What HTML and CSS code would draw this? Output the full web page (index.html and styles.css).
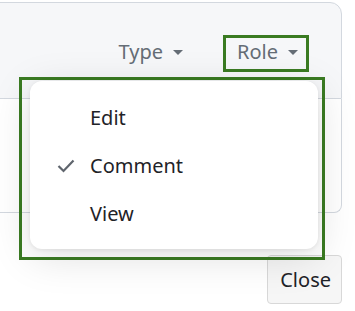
FILE: index.html
```html
<!DOCTYPE html>
<html lang="en">
<head>
<meta charset="UTF-8">
<meta name="viewport" content="width=device-width, initial-scale=1.0">
<title>Share settings</title>
<link rel="stylesheet" href="styles.css">
</head>
<body>
<div class="page">
  <div class="card">
    <div class="card-header">
      <div class="filters">
        <button class="filter">Type <svg class="caret" width="10" height="5" viewBox="0 0 10 5"><polygon points="0,0 10,0 5,5"/></svg></button>
        <button class="filter active">Role <svg class="caret" width="10" height="5" viewBox="0 0 10 5"><polygon points="0,0 10,0 5,5"/></svg></button>
      </div>
    </div>
    <div class="card-body"></div>
  </div>

  <div class="footer">
    <button class="btn">Close</button>
  </div>

  <!-- role dropdown, open -->
  <div class="menu-frame">
    <ul class="menu">
      <li class="menu-item">Edit</li>
      <li class="menu-item checked">
        <svg class="check" width="18" height="14" viewBox="0 0 18 14"><polyline points="1.5,7 6.5,12 16.5,1.5"/></svg>
        Comment
      </li>
      <li class="menu-item">View</li>
    </ul>
  </div>
</div>
</body>
</html>
```

FILE: styles.css
```css
body {
  font-family: "Noto Sans", "Open Sans", sans-serif;
  background-color: #fff;
  margin: 0;
  padding: 0;
}

.page {
  position: relative;
  width: 355px;
  height: 311px;
  overflow: hidden;
}

.card {
  margin: 2px 0 0 -20px;
  width: 362px;
}

.card-header {
  height: 95px;
  background-color: #f6f7f9;
  border: 1px solid #d3d8df;
  border-radius: 0 12px 0 0;
  box-sizing: border-box;
  height: 97px;
  padding: 32px 32px 0 0;
}

.filters {
  display: flex;
  justify-content: flex-end;
  gap: 29px;
}

.filter {
  display: flex;
  align-items: center;
  gap: 10px;
  font-family: inherit;
  font-size: 20px;
  line-height: 28px;
  color: #656d76;
  background: none;
  border: 3px solid transparent;
  padding: 0 8px 3px 11px;
  margin: 0;
}

.filter.active {
  border-color: #3a7b22;
}

.caret {
  fill: #656d76;
  margin-top: 1px;
}

.card-body {
  height: 113px;
  background-color: #fff;
  border: 1px solid #d3d8df;
  border-top: none;
  border-radius: 0 0 8px 0;
}

.footer {
  display: flex;
  justify-content: flex-end;
  width: 342px;
  margin-top: 42px;
}

.btn {
  font-family: inherit;
  font-size: 20px;
  line-height: 47px;
  color: #1f2328;
  background-color: #f6f6f6;
  border: 1px solid #d8d8d8;
  border-radius: 4px;
  padding: 0 10px 0 12px;
  margin: 0;
}

.menu-frame {
  position: absolute;
  left: 19px;
  top: 77px;
  width: 306px;
  height: 183px;
  box-sizing: border-box;
  border: 3px solid #3a7b22;
}

.menu {
  list-style: none;
  margin: 1px 0 0 8px;
  padding: 13px 0 11px;
  width: 288px;
  box-sizing: border-box;
  background-color: #fff;
  border-radius: 12px;
  box-shadow: 0 8px 40px rgba(0, 0, 0, 0.13), 0 1px 4px rgba(0, 0, 0, 0.08);
}

.menu-item {
  position: relative;
  height: 48px;
  line-height: 48px;
  padding-left: 60px;
  font-size: 20px;
  color: #1f2328;
}

.check {
  position: absolute;
  left: 27px;
  top: 17px;
  fill: none;
  stroke: #5f656d;
  stroke-width: 2.2;
}
```
